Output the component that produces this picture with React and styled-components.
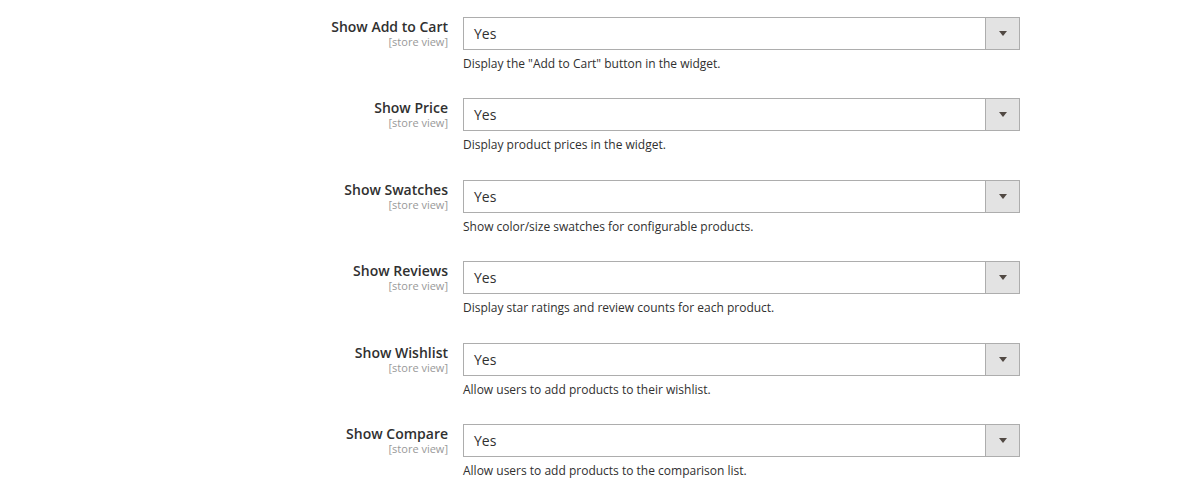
import React from 'react';
import styled, { createGlobalStyle } from 'styled-components';

const GlobalStyle = createGlobalStyle`
  body {
    margin: 0;
    background: #ffffff;
    font-family: 'Open Sans', 'Liberation Sans', sans-serif;
    color: #303030;
  }
`;

const Fieldset = styled.div`
  display: flex;
  flex-direction: column;
  padding-top: 17px;
`;

const Row = styled.div`
  display: flex;
  height: 81.4px;
`;

const Label = styled.div`
  width: 448px;
  padding-top: 1px;
  padding-right: 15px;
  display: flex;
  flex-direction: column;
  align-items: flex-end;
`;

const Title = styled.span`
  font-size: 14px;
  font-weight: 600;
  line-height: 18px;
  color: #303030;
`;

const Scope = styled.span`
  font-size: 11px;
  line-height: 12px;
  color: #999999;
`;

const Control = styled.div`
  display: flex;
  flex-direction: column;
  width: 557px;
`;

const Select = styled.div`
  display: flex;
  height: 33px;
  box-sizing: border-box;
  border: 1px solid #adadad;
  background: #ffffff;
`;

const Value = styled.div`
  flex: 1;
  padding-left: 10px;
  font-size: 14px;
  line-height: 31px;
  color: #303030;
`;

const Arrow = styled.div`
  width: 33px;
  border-left: 1px solid #adadad;
  background: #e3e3e3;
  display: flex;
  align-items: center;
  justify-content: center;
  &::after {
    content: '';
    border-left: 4px solid transparent;
    border-right: 4px solid transparent;
    border-top: 5px solid #514943;
  }
`;

const Note = styled.div`
  margin-top: 5px;
  font-size: 12px;
  line-height: 17px;
  color: #303030;
`;

const fields = [
  ['Show Add to Cart', 'Display the "Add to Cart" button in the widget.'],
  ['Show Price', 'Display product prices in the widget.'],
  ['Show Swatches', 'Show color/size swatches for configurable products.'],
  ['Show Reviews', 'Display star ratings and review counts for each product.'],
  ['Show Wishlist', 'Allow users to add products to their wishlist.'],
  ['Show Compare', 'Allow users to add products to the comparison list.'],
];

const App = () => (
  <>
    <GlobalStyle />
    <Fieldset>
      {fields.map(([title, note]) => (
        <Row key={title}>
          <Label>
            <Title>{title}</Title>
            <Scope>[store view]</Scope>
          </Label>
          <Control>
            <Select>
              <Value>Yes</Value>
              <Arrow />
            </Select>
            <Note>{note}</Note>
          </Control>
        </Row>
      ))}
    </Fieldset>
  </>
);

export default App;
